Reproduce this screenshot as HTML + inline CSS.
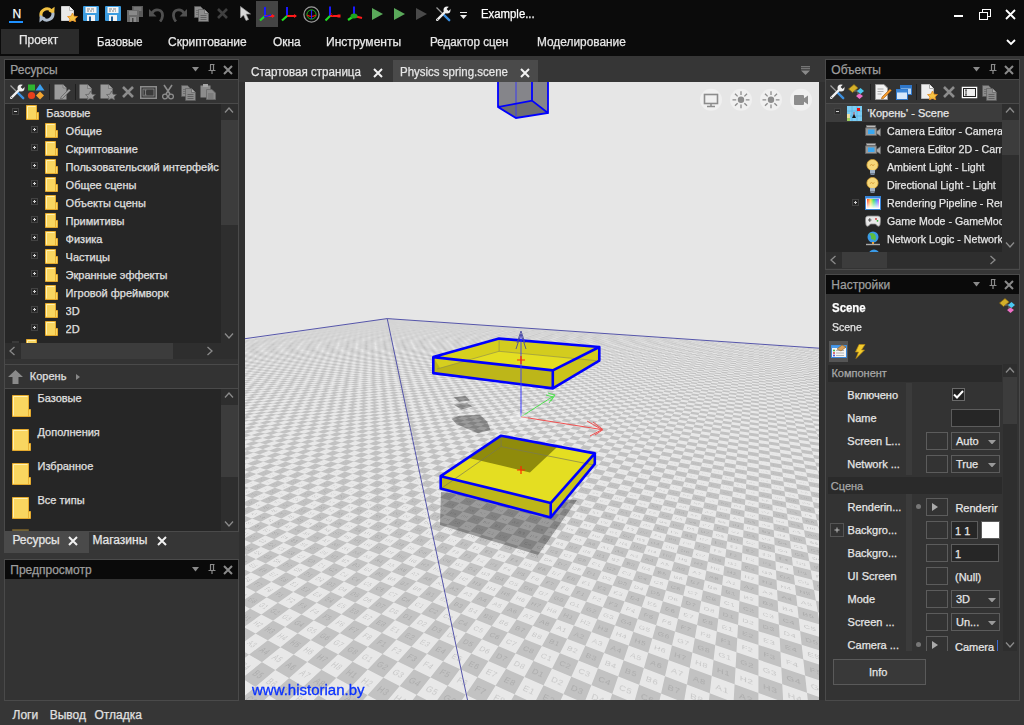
<!DOCTYPE html><html><head><meta charset="utf-8"><style>
*{margin:0;padding:0;box-sizing:border-box}
html,body{width:1024px;height:725px;overflow:hidden}
body{background:#363636;font-family:"Liberation Sans",sans-serif;font-size:12px;position:relative}
.a{position:absolute;display:block}
.t{position:absolute;white-space:nowrap;-webkit-text-stroke:0.25px currentColor}
</style></head><body>
<div class="a" style="left:0px;top:0px;width:1024px;height:56px;background:#0b0b0b;"></div>
<div class="a" style="left:1px;top:29px;width:78px;height:25px;background:#2b2b2b;"></div>
<div class="t" style="left:12.5px;top:6.64px;font-size:12px;line-height:14px;color:#ffffff;font-weight:normal;">N</div>
<div class="a" style="left:9px;top:21px;width:14px;height:1.5px;background:#1e90ff;"></div>
<div class="t" style="left:481.3px;top:7.34px;font-size:12px;line-height:14px;color:#ffffff;"><span style="display:inline-block;transform-origin:0 0;transform:scaleX(0.9470)">Example...</span></div>
<div class="t" style="left:18.75px;top:32.84px;font-size:12px;line-height:14px;color:#e8e8e8;"><span style="display:inline-block;transform-origin:0 0;transform:scaleX(0.9942)">Проект</span></div>
<div class="t" style="left:96.6px;top:35.34px;font-size:12px;line-height:14px;color:#e8e8e8;"><span style="display:inline-block;transform-origin:0 0;transform:scaleX(0.9451)">Базовые</span></div>
<div class="t" style="left:168.3px;top:35.34px;font-size:12px;line-height:14px;color:#e8e8e8;"><span style="display:inline-block;transform-origin:0 0;transform:scaleX(0.9994)">Скриптование</span></div>
<div class="t" style="left:273.3px;top:35.34px;font-size:12px;line-height:14px;color:#e8e8e8;"><span style="display:inline-block;transform-origin:0 0;transform:scaleX(0.9932)">Окна</span></div>
<div class="t" style="left:326.4px;top:35.34px;font-size:12px;line-height:14px;color:#e8e8e8;"><span style="display:inline-block;transform-origin:0 0;transform:scaleX(1.0050)">Инструменты</span></div>
<div class="t" style="left:429.5px;top:35.34px;font-size:12px;line-height:14px;color:#e8e8e8;"><span style="display:inline-block;transform-origin:0 0;transform:scaleX(0.9688)">Редактор сцен</span></div>
<div class="t" style="left:536.7px;top:35.34px;font-size:12px;line-height:14px;color:#e8e8e8;"><span style="display:inline-block;transform-origin:0 0;transform:scaleX(0.9889)">Моделирование</span></div>
<div class="a" style="left:4px;top:59px;width:235px;height:473px;background:#333;border:1px solid #4a4a4a;"></div>
<div class="a" style="left:5px;top:60px;width:233px;height:19px;background:#0a0a0a;"></div>
<div class="t" style="left:10.3px;top:62.84px;font-size:12px;line-height:14px;color:#9e9e9e;">Ресурсы</div>
<div class="a" style="left:5px;top:79px;width:233px;height:1px;background:#4a4a4a;"></div>
<div class="a" style="left:5px;top:103px;width:233px;height:1px;background:#4a4a4a;"></div>
<div class="a" style="left:5px;top:104px;width:216px;height:239px;background:#262626;"></div>
<div class="a" style="left:221px;top:104px;width:17px;height:239px;background:#2e2e2e;"></div>
<div class="a" style="left:221px;top:120px;width:17px;height:105px;background:#3c3c3c;"></div>
<div class="a" style="left:5px;top:343px;width:233px;height:16px;background:#2e2e2e;"></div>
<div class="a" style="left:21px;top:343px;width:152px;height:16px;background:#3c3c3c;"></div>
<div class="a" style="left:5px;top:364px;width:233px;height:1px;background:#4a4a4a;"></div>
<div class="t" style="left:29.8px;top:369.69px;font-size:11px;line-height:13px;color:#e0e0e0;">Корень</div>
<div class="a" style="left:5px;top:388px;width:233px;height:1px;background:#4a4a4a;"></div>
<div class="a" style="left:5px;top:389px;width:216px;height:142px;background:#262626;"></div>
<div class="a" style="left:221px;top:389px;width:17px;height:142px;background:#2e2e2e;"></div>
<div class="a" style="left:221px;top:405px;width:17px;height:72px;background:#3c3c3c;"></div>
<div class="t" style="left:46.3px;top:106.99px;font-size:11px;line-height:13px;color:#e0e0e0;width:174.70px;overflow:hidden;">Базовые</div>
<div class="t" style="left:65.6px;top:124.99px;font-size:11px;line-height:13px;color:#e0e0e0;width:155.40px;overflow:hidden;">Общие</div>
<div class="t" style="left:65.6px;top:142.99px;font-size:11px;line-height:13px;color:#e0e0e0;width:155.40px;overflow:hidden;">Скриптование</div>
<div class="t" style="left:65.6px;top:160.99px;font-size:11px;line-height:13px;color:#e0e0e0;width:155.40px;overflow:hidden;">Пользовательский интерфейс</div>
<div class="t" style="left:65.6px;top:178.99px;font-size:11px;line-height:13px;color:#e0e0e0;width:155.40px;overflow:hidden;">Общее сцены</div>
<div class="t" style="left:65.6px;top:196.99px;font-size:11px;line-height:13px;color:#e0e0e0;width:155.40px;overflow:hidden;">Объекты сцены</div>
<div class="t" style="left:65.6px;top:214.99px;font-size:11px;line-height:13px;color:#e0e0e0;width:155.40px;overflow:hidden;">Примитивы</div>
<div class="t" style="left:65.6px;top:232.99px;font-size:11px;line-height:13px;color:#e0e0e0;width:155.40px;overflow:hidden;">Физика</div>
<div class="t" style="left:65.6px;top:250.99px;font-size:11px;line-height:13px;color:#e0e0e0;width:155.40px;overflow:hidden;">Частицы</div>
<div class="t" style="left:65.6px;top:268.99px;font-size:11px;line-height:13px;color:#e0e0e0;width:155.40px;overflow:hidden;">Экранные эффекты</div>
<div class="t" style="left:65.6px;top:286.99px;font-size:11px;line-height:13px;color:#e0e0e0;width:155.40px;overflow:hidden;">Игровой фреймворк</div>
<div class="t" style="left:65.6px;top:304.99px;font-size:11px;line-height:13px;color:#e0e0e0;width:155.40px;overflow:hidden;">3D</div>
<div class="t" style="left:65.6px;top:322.99px;font-size:11px;line-height:13px;color:#e0e0e0;width:155.40px;overflow:hidden;">2D</div>
<div class="t" style="left:37.5px;top:392.19px;font-size:11px;line-height:13px;color:#e0e0e0;">Базовые</div>
<div class="t" style="left:37.5px;top:426.19px;font-size:11px;line-height:13px;color:#e0e0e0;">Дополнения</div>
<div class="t" style="left:37.5px;top:460.19px;font-size:11px;line-height:13px;color:#e0e0e0;">Избранное</div>
<div class="t" style="left:37.5px;top:494.19px;font-size:11px;line-height:13px;color:#e0e0e0;">Все типы</div>
<div class="a" style="left:4px;top:531px;width:85px;height:22px;background:#4a4a4a;"></div>
<div class="t" style="left:12.4px;top:532.54px;font-size:12px;line-height:14px;color:#e6e6e6;">Ресурсы</div>
<div class="t" style="left:92.4px;top:532.54px;font-size:12px;line-height:14px;color:#e6e6e6;">Магазины</div>
<div class="a" style="left:4px;top:559px;width:235px;height:142px;background:#333;border:1px solid #4a4a4a;"></div>
<div class="a" style="left:5px;top:560px;width:233px;height:19px;background:#0a0a0a;"></div>
<div class="t" style="left:10.3px;top:562.84px;font-size:12px;line-height:14px;color:#9e9e9e;">Предпросмотр</div>
<div class="t" style="left:12.5px;top:707.84px;font-size:12px;line-height:14px;color:#e0e0e0;">Логи</div>
<div class="t" style="left:49.7px;top:707.84px;font-size:12px;line-height:14px;color:#e0e0e0;">Вывод</div>
<div class="t" style="left:94.5px;top:707.84px;font-size:12px;line-height:14px;color:#e0e0e0;">Отладка</div>
<div class="a" style="left:239px;top:56px;width:587px;height:26px;background:#363636;"></div>
<div class="a" style="left:239px;top:82px;width:6px;height:618px;background:#303030;"></div>
<div class="a" style="left:819px;top:82px;width:6px;height:618px;background:#303030;"></div>
<div class="a" style="left:393px;top:60px;width:145px;height:22px;background:#4a4a4a;"></div>
<div class="t" style="left:251px;top:64.84px;font-size:12px;line-height:14px;color:#e6e6e6;"><span style="display:inline-block;transform-origin:0 0;transform:scaleX(0.9681)">Стартовая страница</span></div>
<div class="t" style="left:400px;top:64.84px;font-size:12px;line-height:14px;color:#e6e6e6;"><span style="display:inline-block;transform-origin:0 0;transform:scaleX(0.9581)">Physics spring.scene</span></div>
<div class="a" style="left:245px;top:82px;width:574px;height:618px;background:#e6e6e6;overflow:hidden">
<svg class="a" style="left:0;top:0" width="574" height="618" viewBox="245 82 574 618"><defs><filter id="ff" x="0" y="0" width="1" height="1" color-interpolation-filters="sRGB"><feComponentTransfer><feFuncR type="linear" slope="0.1529" intercept="0.7608"/><feFuncG type="linear" slope="0.1529" intercept="0.7608"/><feFuncB type="linear" slope="0.1529" intercept="0.7608"/></feComponentTransfer></filter></defs><g filter="url(#ff)" style="isolation:isolate"><path d="M387.20 318.60 L826.16 349.34 L2201.22 2137.45 L-213.59 409.97Z" fill="#fff"/><path d="M387.20 318.60 L388.40 318.68 L-212.78 410.55 L-213.59 409.97ZM390.60 318.84 L392.81 318.99 L-209.79 412.69 L-211.30 411.61ZM395.03 319.15 L397.26 319.30 L-206.71 414.89 L-208.26 413.78ZM399.51 319.46 L401.76 319.62 L-203.54 417.16 L-205.14 416.01ZM404.03 319.78 L406.31 319.94 L-200.28 419.49 L-201.92 418.31ZM408.61 320.10 L410.92 320.26 L-196.91 421.90 L-198.61 420.69ZM413.24 320.42 L415.57 320.59 L-193.44 424.38 L-195.19 423.13ZM417.92 320.75 L420.28 320.92 L-189.86 426.94 L-191.67 425.65ZM422.65 321.08 L425.04 321.25 L-186.17 429.58 L-188.03 428.25ZM427.44 321.42 L429.85 321.59 L-182.36 432.31 L-184.28 430.94ZM432.28 321.76 L434.72 321.93 L-178.42 435.13 L-180.40 433.71ZM437.18 322.10 L439.65 322.27 L-174.34 438.04 L-176.40 436.57ZM442.13 322.45 L444.63 322.62 L-170.13 441.06 L-172.25 439.54ZM447.14 322.80 L449.67 322.97 L-165.77 444.18 L-167.97 442.60ZM452.21 323.15 L454.77 323.33 L-161.26 447.40 L-163.53 445.78ZM457.34 323.51 L459.93 323.69 L-156.58 450.75 L-158.94 449.06ZM462.53 323.88 L465.15 324.06 L-151.73 454.22 L-154.18 452.47ZM467.79 324.24 L470.44 324.43 L-146.70 457.82 L-149.24 456.00ZM473.10 324.62 L475.78 324.80 L-141.48 461.55 L-144.12 459.67ZM478.48 324.99 L481.19 325.18 L-136.06 465.43 L-138.79 463.47ZM483.92 325.37 L486.67 325.57 L-130.42 469.47 L-133.26 467.43ZM489.43 325.76 L492.22 325.95 L-124.55 473.67 L-127.51 471.55ZM495.01 326.15 L497.83 326.35 L-118.44 478.04 L-121.52 475.83ZM500.66 326.55 L503.51 326.74 L-112.07 482.59 L-115.28 480.29ZM506.38 326.95 L509.26 327.15 L-105.42 487.35 L-108.78 484.95ZM512.17 327.35 L515.09 327.56 L-98.49 492.31 L-101.99 489.80ZM518.03 327.76 L520.98 327.97 L-91.24 497.49 L-94.90 494.87ZM523.96 328.18 L526.96 328.39 L-83.65 502.92 L-87.49 500.18ZM529.97 328.60 L533.01 328.81 L-75.71 508.60 L-79.73 505.73ZM536.06 329.02 L539.13 329.24 L-67.39 514.55 L-71.60 511.54ZM542.23 329.46 L545.34 329.67 L-58.65 520.80 L-63.08 517.64ZM548.47 329.89 L551.63 330.11 L-49.48 527.37 L-54.12 524.05ZM554.80 330.34 L558.00 330.56 L-39.82 534.28 L-44.71 530.78ZM561.21 330.79 L564.45 331.01 L-29.64 541.56 L-34.80 537.87ZM567.71 331.24 L570.99 331.47 L-18.91 549.23 L-24.35 545.34ZM574.29 331.70 L577.62 331.93 L-7.57 557.35 L-13.32 553.23ZM580.96 332.17 L584.33 332.40 L4.43 565.93 L-1.66 561.58ZM587.72 332.64 L591.14 332.88 L17.14 575.03 L10.69 570.41ZM594.58 333.12 L598.04 333.36 L30.64 584.68 L23.79 579.78ZM601.52 333.61 L605.03 333.85 L45.00 594.96 L37.71 589.74ZM608.57 334.10 L612.12 334.35 L60.31 605.91 L52.53 600.34ZM615.71 334.60 L619.31 334.85 L76.66 617.60 L68.35 611.66ZM622.95 335.11 L626.60 335.36 L94.16 630.12 L85.26 623.75ZM630.29 335.62 L634.00 335.88 L112.93 643.55 L103.37 636.71ZM637.73 336.14 L641.50 336.41 L133.13 658.00 L122.84 650.64ZM645.29 336.67 L649.10 336.94 L154.91 673.58 L143.81 665.64ZM652.95 337.21 L656.82 337.48 L178.49 690.45 L166.46 681.85ZM660.72 337.75 L664.65 338.03 L204.07 708.75 L191.01 699.41ZM668.60 338.31 L672.59 338.58 L231.95 728.69 L217.71 718.50ZM676.61 338.87 L680.65 339.15 L262.42 750.49 L246.84 739.34ZM684.72 339.43 L688.83 339.72 L295.88 774.43 L278.75 762.17ZM692.97 340.01 L697.13 340.30 L332.80 800.84 L313.88 787.30ZM701.33 340.60 L705.56 340.89 L373.72 830.11 L352.72 815.09ZM709.82 341.19 L714.12 341.49 L419.34 862.75 L395.89 845.97ZM718.44 341.80 L722.80 342.10 L470.53 899.37 L444.18 880.52ZM727.19 342.41 L731.62 342.72 L528.36 940.74 L498.54 919.40ZM736.08 343.03 L740.58 343.35 L594.23 987.86 L560.19 963.51ZM745.11 343.66 L749.68 343.98 L669.92 1042.00 L630.71 1013.96ZM754.28 344.31 L758.92 344.63 L757.81 1104.88 L712.16 1072.23ZM763.60 344.96 L768.31 345.29 L861.12 1178.79 L807.30 1140.28ZM773.06 345.62 L777.85 345.96 L984.29 1266.90 L919.88 1220.82ZM782.68 346.29 L787.54 346.63 L1133.66 1373.75 L1055.20 1317.63ZM792.45 346.98 L797.40 347.32 L1318.56 1506.02 L1220.92 1436.17ZM802.38 347.67 L807.41 348.03 L1553.41 1674.03 L1428.56 1584.71ZM812.48 348.38 L817.59 348.74 L1861.61 1894.50 L1696.35 1776.28ZM822.74 349.10 L826.16 349.34 L2201.22 2137.45 L2054.85 2032.74Z" fill="#000"/><path d="M387.20 318.60 L826.16 349.34 L826.65 349.97 L385.45 318.87ZM383.38 319.18 L827.23 350.73 L827.83 351.50 L381.29 319.50ZM379.17 319.82 L828.43 352.28 L829.04 353.08 L377.03 320.15ZM374.86 320.48 L829.67 353.89 L830.30 354.72 L372.67 320.81ZM370.45 321.15 L830.95 355.56 L831.61 356.42 L368.21 321.49ZM365.94 321.83 L832.28 357.29 L832.96 358.18 L363.65 322.18ZM361.33 322.53 L833.66 359.08 L834.37 360.00 L358.98 322.89ZM356.60 323.25 L835.09 360.94 L835.83 361.90 L354.20 323.62ZM351.76 323.99 L836.58 362.88 L837.34 363.88 L349.30 324.36ZM346.81 324.74 L838.13 364.89 L838.92 365.93 L344.28 325.13ZM341.73 325.52 L839.74 366.99 L840.57 368.07 L339.14 325.91ZM336.52 326.31 L841.42 369.17 L842.28 370.30 L333.87 326.71ZM331.19 327.12 L843.16 371.45 L844.07 372.62 L328.47 327.53ZM325.71 327.95 L844.99 373.82 L845.93 375.04 L322.92 328.38ZM320.10 328.81 L846.90 376.30 L847.88 377.58 L317.23 329.24ZM314.33 329.68 L848.89 378.89 L849.92 380.23 L311.40 330.13ZM308.42 330.58 L850.97 381.60 L852.05 383.00 L305.40 331.04ZM302.34 331.51 L853.16 384.44 L854.29 385.91 L299.24 331.98ZM296.10 332.45 L855.45 387.42 L856.64 388.96 L292.92 332.94ZM289.69 333.43 L857.85 390.55 L859.10 392.17 L286.41 333.93ZM283.09 334.43 L860.38 393.83 L861.70 395.54 L279.72 334.95ZM276.31 335.46 L863.04 397.29 L864.43 399.09 L272.84 335.99ZM269.33 336.53 L865.85 400.94 L867.31 402.84 L265.76 337.07ZM262.14 337.62 L868.81 404.79 L870.35 406.80 L258.47 338.18ZM254.75 338.74 L871.94 408.86 L873.57 410.98 L250.96 339.32ZM247.12 339.90 L875.25 413.16 L876.98 415.41 L243.23 340.50ZM239.27 341.10 L878.76 417.73 L880.60 420.12 L235.25 341.71ZM231.17 342.33 L882.49 422.58 L884.44 425.12 L227.02 342.96ZM222.81 343.60 L886.46 427.75 L888.54 430.46 L218.53 344.25ZM214.19 344.91 L890.70 433.25 L892.92 436.15 L209.77 345.58ZM205.28 346.27 L895.22 439.14 L897.60 442.24 L200.71 346.96ZM196.07 347.67 L900.07 445.44 L902.63 448.77 L191.36 348.38ZM186.56 349.11 L905.28 452.22 L908.03 455.79 L181.68 349.86ZM176.72 350.61 L910.88 459.50 L913.85 463.36 L171.67 351.38ZM166.53 352.16 L916.93 467.37 L920.15 471.55 L161.30 352.95ZM155.98 353.76 L923.49 475.90 L926.98 480.43 L150.56 354.59ZM145.05 355.43 L930.61 485.16 L934.41 490.10 L139.43 356.28ZM133.71 357.15 L938.38 495.26 L942.53 500.66 L127.89 358.04ZM121.95 358.94 L946.88 506.32 L951.45 512.25 L115.90 359.86ZM109.74 360.80 L956.23 518.48 L961.27 525.03 L103.46 361.75ZM97.05 362.73 L966.57 531.91 L972.15 539.17 L90.52 363.72ZM83.85 364.73 L978.04 546.83 L984.26 554.93 L77.06 365.77ZM70.12 366.82 L990.85 563.50 L997.84 572.59 L63.04 367.90ZM55.82 369.00 L1005.26 582.24 L1013.16 592.51 L48.44 370.12ZM40.91 371.26 L1021.58 603.46 L1030.58 615.16 L33.22 372.43ZM25.35 373.63 L1040.22 627.69 L1050.56 641.15 L17.32 374.85ZM9.11 376.10 L1061.70 655.63 L1073.72 671.26 L0.72 377.38ZM-7.87 378.68 L1086.74 688.19 L1100.88 706.57 L-16.65 380.02ZM-25.64 381.38 L1116.29 726.62 L1133.16 748.56 L-34.83 382.78ZM-44.25 384.21 L1151.70 772.67 L1172.18 799.30 L-53.88 385.68ZM-63.76 387.18 L1194.91 828.85 L1220.29 861.85 L-73.87 388.72ZM-84.24 390.30 L1248.80 898.93 L1281.07 940.89 L-94.87 391.91ZM-105.77 393.57 L1317.89 988.78 L1360.31 1043.93 L-116.96 395.27ZM-128.43 397.02 L1409.69 1108.15 L1467.90 1183.85 L-140.21 398.81ZM-152.31 400.65 L1537.56 1274.43 L1622.40 1384.75 L-164.74 402.54ZM-177.51 404.48 L1727.99 1522.06 L1863.00 1697.64 L-190.64 406.48ZM-204.14 408.53 L2041.74 1930.07 L2201.22 2137.45 L-213.59 409.97Z" fill="#fff" style="mix-blend-mode:difference"/></g></svg>
<div class="a" style="left:0;top:0;width:574px;height:618px;overflow:hidden;-webkit-mask-image:linear-gradient(to bottom, transparent 360px, #000 440px);mask-image:linear-gradient(to bottom, transparent 360px, #000 440px)"><div class="a" style="left:0;top:0;width:1894.0px;height:1586.2px;transform-origin:0 0;transform:matrix3d(0.11699661,-0.03165991,0,-0.0001758396,-0.18344925,-0.06425577,0,-0.0003568774,0,0,1,0,167.536036,297.705136,0,1.00000000)"><svg width="1894" height="1586"><defs><pattern id="lblA" patternUnits="userSpaceOnUse" x="70.00" y="190.23" width="256" height="256"><g font-family="Liberation Sans" font-size="13.5" text-anchor="middle" letter-spacing="1"><text x="16.0" y="20.9" fill="#c8c8c8">A1</text><text x="48.0" y="20.9" fill="#acacac">A2</text><text x="80.0" y="20.9" fill="#c8c8c8">A3</text><text x="112.0" y="20.9" fill="#acacac">A4</text><text x="144.0" y="20.9" fill="#c8c8c8">A5</text><text x="176.0" y="20.9" fill="#acacac">A6</text><text x="208.0" y="20.9" fill="#c8c8c8">A7</text><text x="240.0" y="20.9" fill="#acacac">A8</text><text x="16.0" y="52.9" fill="#acacac">B1</text><text x="48.0" y="52.9" fill="#c8c8c8">B2</text><text x="80.0" y="52.9" fill="#acacac">B3</text><text x="112.0" y="52.9" fill="#c8c8c8">B4</text><text x="144.0" y="52.9" fill="#acacac">B5</text><text x="176.0" y="52.9" fill="#c8c8c8">B6</text><text x="208.0" y="52.9" fill="#acacac">B7</text><text x="240.0" y="52.9" fill="#c8c8c8">B8</text><text x="16.0" y="84.9" fill="#c8c8c8">C1</text><text x="48.0" y="84.9" fill="#acacac">C2</text><text x="80.0" y="84.9" fill="#c8c8c8">C3</text><text x="112.0" y="84.9" fill="#acacac">C4</text><text x="144.0" y="84.9" fill="#c8c8c8">C5</text><text x="176.0" y="84.9" fill="#acacac">C6</text><text x="208.0" y="84.9" fill="#c8c8c8">C7</text><text x="240.0" y="84.9" fill="#acacac">C8</text><text x="16.0" y="116.9" fill="#acacac">D1</text><text x="48.0" y="116.9" fill="#c8c8c8">D2</text><text x="80.0" y="116.9" fill="#acacac">D3</text><text x="112.0" y="116.9" fill="#c8c8c8">D4</text><text x="144.0" y="116.9" fill="#acacac">D5</text><text x="176.0" y="116.9" fill="#c8c8c8">D6</text><text x="208.0" y="116.9" fill="#acacac">D7</text><text x="240.0" y="116.9" fill="#c8c8c8">D8</text><text x="16.0" y="148.9" fill="#c8c8c8">E1</text><text x="48.0" y="148.9" fill="#acacac">E2</text><text x="80.0" y="148.9" fill="#c8c8c8">E3</text><text x="112.0" y="148.9" fill="#acacac">E4</text><text x="144.0" y="148.9" fill="#c8c8c8">E5</text><text x="176.0" y="148.9" fill="#acacac">E6</text><text x="208.0" y="148.9" fill="#c8c8c8">E7</text><text x="240.0" y="148.9" fill="#acacac">E8</text><text x="16.0" y="180.9" fill="#acacac">F1</text><text x="48.0" y="180.9" fill="#c8c8c8">F2</text><text x="80.0" y="180.9" fill="#acacac">F3</text><text x="112.0" y="180.9" fill="#c8c8c8">F4</text><text x="144.0" y="180.9" fill="#acacac">F5</text><text x="176.0" y="180.9" fill="#c8c8c8">F6</text><text x="208.0" y="180.9" fill="#acacac">F7</text><text x="240.0" y="180.9" fill="#c8c8c8">F8</text><text x="16.0" y="212.9" fill="#c8c8c8">G1</text><text x="48.0" y="212.9" fill="#acacac">G2</text><text x="80.0" y="212.9" fill="#c8c8c8">G3</text><text x="112.0" y="212.9" fill="#acacac">G4</text><text x="144.0" y="212.9" fill="#c8c8c8">G5</text><text x="176.0" y="212.9" fill="#acacac">G6</text><text x="208.0" y="212.9" fill="#c8c8c8">G7</text><text x="240.0" y="212.9" fill="#acacac">G8</text><text x="16.0" y="244.9" fill="#acacac">H1</text><text x="48.0" y="244.9" fill="#c8c8c8">H2</text><text x="80.0" y="244.9" fill="#acacac">H3</text><text x="112.0" y="244.9" fill="#c8c8c8">H4</text><text x="144.0" y="244.9" fill="#acacac">H5</text><text x="176.0" y="244.9" fill="#c8c8c8">H6</text><text x="208.0" y="244.9" fill="#acacac">H7</text><text x="240.0" y="244.9" fill="#c8c8c8">H8</text></g></pattern></defs><rect width="1894" height="1586" fill="url(#lblA)"/></svg></div></div>
</div>
<svg class="a" style="left:245px;top:82px" width="574" height="618" viewBox="245 82 574 618"><path d="M245 338.7 L387.2 318.6 L819 348.2" stroke="#5555aa" stroke-width="1" fill="none"/><path d="M387.2 318.6 L467.5 700" stroke="#5555aa" stroke-width="1" fill="none"/><path d="M453.9 397.2 L465.2 395.7 L470 400.6 L459.3 402.1Z" fill="#000" fill-opacity="0.33"/><path d="M453.4 404.5 L467.1 403.1 L472.5 406.5 L461.3 409.4Z" fill="#000" fill-opacity="0.33"/><path d="M451.5 418.7 L459.3 415.8 L479.8 414.8 L487.1 421.6 L490.5 429.9 L477.9 433.3 L456.4 424Z" fill="#000" fill-opacity="0.33"/><path d="M441 492 L577 500 L538 555 L440 525Z" fill="#000" fill-opacity="0.33"/><path d="M521 388 V416.8" stroke="#3a3aff" stroke-width="1"/><path d="M521 416.8 L554.4 395.5" stroke="#50e050" stroke-width="1"/><path d="M548 393 L555 395 L551 401 M546 395 L553 397 L549 403" stroke="#50e050" stroke-width="1" fill="none"/><path d="M521 416.8 L602 429.6" stroke="#f05050" stroke-width="1"/><path d="M587 421 L602 429.6 L590 436 M593 422 L603 429.6 L595 435" stroke="#f05050" stroke-width="1" fill="none"/><ellipse cx="519" cy="418" rx="9" ry="5" fill="#fff" fill-opacity="0.35"/><path d="M433.3 357.1 L552.8 370.4 L552.8 388.4 L433.3 373.1Z" fill="#bdb619"/><path d="M552.8 370.4 L599.3 347 L599.3 360.6 L552.8 388.4Z" fill="#cac31c"/><path d="M433.3 357.1 L499.1 338.6 L599.3 347 L552.8 370.4Z" fill="#e4de22"/><path d="M433.3 357.1 L499.1 338.6 L499.1 351.3 L440 368Z" fill="#d6cf1e"/><path d="M499.1 338.6 L599.3 347 L596 360.6 L499.1 351.3Z" fill="#d3cc1e"/><path d="M499.1 339 V351.3 L596 360.6 M499.1 351.3 L437 369" stroke="#8a8a50" stroke-width="0.9" fill="none" stroke-opacity="0.7"/><path d="M433.3 357.1 L499.1 338.6 L599.3 347 L552.8 370.4Z M433.3 357.1 V373.1 L552.8 388.4 L599.3 360.6 V347 M552.8 370.4 V388.4" stroke="#0000ff" stroke-width="2.6" fill="none" stroke-linejoin="round"/><path d="M521 334 V388" stroke="#3a3aff" stroke-width="1" stroke-opacity="0.9"/><path d="M516 349 L521 334 L526 349 M517 343 L521 331 L525 343" stroke="#4a4aa0" stroke-width="0.9" fill="none"/><path d="M517 360 H525 M521 356 V364" stroke="#ff2a00" stroke-width="1.2"/><path d="M440.7 476.2 L550.7 503.1 L550.7 517.5 L440.7 488.6Z" fill="#bdb619"/><path d="M550.7 503.1 L594.8 453.4 L594.8 463.8 L550.7 517.5Z" fill="#cac31c"/><path d="M440.7 476.2 L501.1 435.7 L594.8 453.4 L550.7 503.1Z" fill="#e4de22"/><path d="M469 458 L501.1 435.7 L557.6 446.5 L529.9 472.4Z" fill="#8f8b0c"/><path d="M501.1 436 V446.6 L593.1 464.9 M501.1 446.6 L441.8 488" stroke="#77775a" stroke-width="0.9" fill="none" stroke-opacity="0.75"/><path d="M440.7 476.2 L501.1 435.7 L594.8 453.4 L550.7 503.1Z M440.7 476.2 V488.6 L550.7 517.5 L594.8 463.8 V453.4 M550.7 503.1 V517.5" stroke="#0000ff" stroke-width="2.6" fill="none" stroke-linejoin="round"/><path d="M517 470 H525 M521 466 V474" stroke="#ff2a00" stroke-width="1.2"/><path d="M498 82 H548 V113 L516 118 L498 107Z" fill="#85858a"/><path d="M498 107 L532 100.6 L548 113 L516 118Z" fill="#6e6e72"/><path d="M532 82 V100.6 L548 113" fill="none" stroke="#9a9aa0" stroke-width="0.8"/><path d="M516 82 V118" stroke="#3a3aee" stroke-width="1"/><path d="M498 82 V107 L516 118 L548 113 V82 M498 107 L532 100.6 L548 113 M532 82 V100.6" stroke="#0000ff" stroke-width="1.8" fill="none"/><circle cx="711" cy="99.8" r="11" fill="#f0f0f0"/><circle cx="741" cy="99.8" r="11" fill="#f0f0f0"/><circle cx="771" cy="99.8" r="11" fill="#f0f0f0"/><circle cx="801" cy="99.8" r="11" fill="#f0f0f0"/><rect x="704.5" y="94.5" width="13" height="9" fill="none" stroke="#8c8c8c" stroke-width="1.6"/><path d="M711 104 V106 M707 106.5 H715" stroke="#8c8c8c" stroke-width="1.5"/><circle cx="741" cy="99.8" r="3.2" fill="#8c8c8c"/><path d="M745.80 99.80 L749.50 99.80 M744.39 103.19 L747.01 105.81 M741.00 104.60 L741.00 108.30 M737.61 103.19 L734.99 105.81 M736.20 99.80 L732.50 99.80 M737.61 96.41 L734.99 93.79 M741.00 95.00 L741.00 91.30 M744.39 96.41 L747.01 93.79 " stroke="#8c8c8c" stroke-width="1.3"/><circle cx="771" cy="99.8" r="3.2" fill="#8c8c8c"/><path d="M775.80 99.80 L779.50 99.80 M774.39 103.19 L777.01 105.81 M771.00 104.60 L771.00 108.30 M767.61 103.19 L764.99 105.81 M766.20 99.80 L762.50 99.80 M767.61 96.41 L764.99 93.79 M771.00 95.00 L771.00 91.30 M774.39 96.41 L777.01 93.79 " stroke="#8c8c8c" stroke-width="1.3"/><rect x="794" y="95" width="10" height="10" rx="1" fill="#8c8c8c"/><path d="M803 99 L808 95.5 V104.5 L803 101Z" fill="#8c8c8c"/></svg>
<div class="t" style="left:252px;top:681.30px;font-size:15px;line-height:17px;color:#0a32ff;-webkit-text-stroke:0.3px #0a32ff;">www.historian.by</div>
<div class="a" style="left:825px;top:59px;width:195px;height:211px;background:#333;border:1px solid #4a4a4a;"></div>
<div class="a" style="left:826px;top:60px;width:193px;height:19px;background:#0a0a0a;"></div>
<div class="t" style="left:831.3px;top:62.84px;font-size:12px;line-height:14px;color:#9e9e9e;">Объекты</div>
<div class="a" style="left:826px;top:79px;width:193px;height:1px;background:#4a4a4a;"></div>
<div class="a" style="left:826px;top:103px;width:193px;height:1px;background:#4a4a4a;"></div>
<div class="a" style="left:826px;top:104px;width:176px;height:148px;background:#262626;"></div>
<div class="a" style="left:1002px;top:104px;width:17px;height:148px;background:#2e2e2e;"></div>
<div class="a" style="left:1002px;top:120px;width:17px;height:35px;background:#3c3c3c;"></div>
<div class="a" style="left:826px;top:104px;width:176px;height:18px;background:#3c3c3c;"></div>
<div class="a" style="left:826px;top:252px;width:193px;height:16px;background:#2e2e2e;"></div>
<div class="a" style="left:842px;top:252px;width:45px;height:16px;background:#3c3c3c;"></div>
<div class="t" style="left:867.4px;top:106.99px;font-size:11px;line-height:13px;color:#e6e6e6;width:134.60px;overflow:hidden;">'Корень' - Scene</div>
<div class="t" style="left:886.7px;top:125.19px;font-size:11px;line-height:13px;color:#e6e6e6;width:115.30px;overflow:hidden;"><span style="display:inline-block;transform-origin:0 0;transform:scaleX(0.9670)">Camera Editor - Camera</span></div>
<div class="t" style="left:886.7px;top:143.19px;font-size:11px;line-height:13px;color:#e6e6e6;width:115.30px;overflow:hidden;"><span style="display:inline-block;transform-origin:0 0;transform:scaleX(0.9670)">Camera Editor 2D - Camera</span></div>
<div class="t" style="left:886.7px;top:161.19px;font-size:11px;line-height:13px;color:#e6e6e6;width:115.30px;overflow:hidden;"><span style="display:inline-block;transform-origin:0 0;transform:scaleX(0.9670)">Ambient Light - Light</span></div>
<div class="t" style="left:886.7px;top:179.19px;font-size:11px;line-height:13px;color:#e6e6e6;width:115.30px;overflow:hidden;"><span style="display:inline-block;transform-origin:0 0;transform:scaleX(0.9670)">Directional Light - Light</span></div>
<div class="t" style="left:886.7px;top:197.19px;font-size:11px;line-height:13px;color:#e6e6e6;width:115.30px;overflow:hidden;"><span style="display:inline-block;transform-origin:0 0;transform:scaleX(0.9670)">Rendering Pipeline - RenderingPipeline</span></div>
<div class="t" style="left:886.7px;top:215.19px;font-size:11px;line-height:13px;color:#e6e6e6;width:115.30px;overflow:hidden;"><span style="display:inline-block;transform-origin:0 0;transform:scaleX(0.9670)">Game Mode - GameMode</span></div>
<div class="t" style="left:886.7px;top:233.19px;font-size:11px;line-height:13px;color:#e6e6e6;width:115.30px;overflow:hidden;"><span style="display:inline-block;transform-origin:0 0;transform:scaleX(0.9670)">Network Logic - NetworkLogic</span></div>
<div class="a" style="left:825px;top:274px;width:195px;height:427px;background:#333;border:1px solid #4a4a4a;"></div>
<div class="a" style="left:826px;top:275px;width:193px;height:19px;background:#0a0a0a;"></div>
<div class="t" style="left:831.3px;top:277.84px;font-size:12px;line-height:14px;color:#9e9e9e;">Настройки</div>
<div class="t" style="left:832px;top:300.54px;font-size:12px;line-height:14px;color:#ffffff;font-weight:bold;"><span style="display:inline-block;transform-origin:0 0;transform:scaleX(0.9531)">Scene</span></div>
<div class="t" style="left:832.4px;top:321.39px;font-size:11px;line-height:13px;color:#e6e6e6;"><span style="display:inline-block;transform-origin:0 0;transform:scaleX(0.9550)">Scene</span></div>
<div class="a" style="left:829px;top:341px;width:19px;height:21px;background:#555;"></div>
<div class="a" style="left:828px;top:365px;width:174px;height:17px;background:#2a2a2a;"></div>
<div class="t" style="left:831.4px;top:367.29px;font-size:11px;line-height:13px;color:#a8a8a8;">Компонент</div>
<div class="t" style="left:847.3px;top:388.69px;font-size:11px;line-height:13px;color:#e6e6e6;">Включено</div>
<div class="t" style="left:847.3px;top:411.69px;font-size:11px;line-height:13px;color:#e6e6e6;">Name</div>
<div class="t" style="left:847.3px;top:434.69px;font-size:11px;line-height:13px;color:#e6e6e6;">Screen L...</div>
<div class="t" style="left:847.3px;top:457.69px;font-size:11px;line-height:13px;color:#e6e6e6;">Network ...</div>
<div class="a" style="left:828px;top:477px;width:174px;height:17px;background:#2a2a2a;"></div>
<div class="t" style="left:830.8px;top:479.69px;font-size:11px;line-height:13px;color:#a8a8a8;">Сцена</div>
<div class="t" style="left:847.6px;top:500.69px;font-size:11px;line-height:13px;color:#e6e6e6;">Renderin...</div>
<div class="t" style="left:847.6px;top:523.69px;font-size:11px;line-height:13px;color:#e6e6e6;">Backgro...</div>
<div class="t" style="left:847.6px;top:546.69px;font-size:11px;line-height:13px;color:#e6e6e6;">Backgro...</div>
<div class="t" style="left:847.6px;top:569.69px;font-size:11px;line-height:13px;color:#e6e6e6;">UI Screen</div>
<div class="t" style="left:847.6px;top:592.69px;font-size:11px;line-height:13px;color:#e6e6e6;">Mode</div>
<div class="t" style="left:847.6px;top:615.69px;font-size:11px;line-height:13px;color:#e6e6e6;">Screen ...</div>
<div class="t" style="left:847.6px;top:638.69px;font-size:11px;line-height:13px;color:#e6e6e6;">Camera ...</div>
<div class="a" style="left:833px;top:659px;width:93px;height:26px;background:#393939;border:1px solid #5a5a5a;"></div>
<div class="t" style="left:869px;top:665.69px;font-size:11px;line-height:13px;color:#e6e6e6;">Info</div>
<svg class="a" style="left:39px;top:5.5px;" width="16" height="17" viewBox="0 0 16 17">
<path d="M2.2 10.5 A6 6 0 0 1 12.2 4.6" stroke="#f0c040" stroke-width="3" fill="none"/>
<path d="M9.6 5.2 L15.6 0.8 L15.2 8.4 Z" fill="#f0c040"/>
<path d="M13.8 6.8 A6 6 0 0 1 3.8 12.4" stroke="#aebccc" stroke-width="3" fill="none"/>
<path d="M6.4 11.8 L0.4 16.4 L0.8 8.8 Z" fill="#aebccc"/></svg>
<svg class="a" style="left:61px;top:5.5px;" width="17" height="16" viewBox="0 0 17 16">
<path d="M0.5 0.5 H8.5 L12.5 4.5 V14.5 H0.5 Z" fill="#e9e9e9" stroke="#cfcfcf"/>
<path d="M8.5 0.5 V4.5 H12.5" fill="#fff" stroke="#bbb"/>
<path d="M11.5 7 L13 10.2 L16.5 10.6 L14 13 L14.7 16 L11.5 14.3 L8.3 16 L9 13 L6.5 10.6 L10 10.2 Z" fill="#f6c443" stroke="#e58a1e" stroke-width="0.8"/></svg>
<svg class="a" style="left:83px;top:6px;" width="16" height="15" viewBox="0 0 16 15">
<rect x="0" y="0" width="16" height="15" rx="1" fill="#3d9de0"/>
<rect x="2.5" y="1" width="11" height="6" fill="#f4f4f4"/>
<path d="M4 3h3M8 3h3M4 5h2M7 5h2M10 5h1" stroke="#666" stroke-width="0.8"/>
<rect x="4" y="9" width="8" height="6" fill="#f4f4f4"/>
<rect x="6" y="10.5" width="2" height="4.5" fill="#1b5f9a"/></svg>
<svg class="a" style="left:105px;top:6px;" width="16" height="15" viewBox="0 0 16 15">
<rect x="0" y="0" width="16" height="15" rx="1" fill="#3d9de0"/>
<rect x="2.5" y="1" width="11" height="6" fill="#f4f4f4"/>
<path d="M4 3h3M8 3h3M4 5h2M7 5h2M10 5h1" stroke="#666" stroke-width="0.8"/>
<rect x="4" y="9" width="8" height="6" fill="#f4f4f4"/>
<rect x="6" y="10.5" width="2" height="4.5" fill="#1b5f9a"/></svg>
<svg class="a" style="left:127px;top:5.5px;" width="16" height="16" viewBox="0 0 16 16">
<rect x="5" y="0" width="11" height="11" fill="#5a5a5a"/>
<rect x="6.5" y="1" width="8" height="4" fill="#777"/>
<rect x="0" y="4" width="12" height="12" fill="#6a6a6a"/>
<rect x="2" y="5" width="8" height="4" fill="#8a8a8a"/>
<rect x="3" y="11" width="6" height="5" fill="#8a8a8a"/>
<rect x="5" y="12" width="1.5" height="4" fill="#444"/></svg>
<svg class="a" style="left:149px;top:5.5px;" width="16" height="16" viewBox="0 0 16 16"><g >
<path d="M3 7 C6 2 14 3 13.5 10 C13.3 12.5 12 14.5 11 15.5" stroke="#505050" stroke-width="2.8" fill="none"/>
<path d="M0 3 L0 10.5 L7.5 10.5 Z" fill="#505050"/></g></svg>
<svg class="a" style="left:171px;top:5.5px;" width="16" height="16" viewBox="0 0 16 16"><g transform="translate(16,0) scale(-1,1)">
<path d="M3 7 C6 2 14 3 13.5 10 C13.3 12.5 12 14.5 11 15.5" stroke="#505050" stroke-width="2.8" fill="none"/>
<path d="M0 3 L0 10.5 L7.5 10.5 Z" fill="#505050"/></g></svg>
<svg class="a" style="left:194px;top:6px;" width="15" height="16" viewBox="0 0 15 16">
<path d="M0.5 0.5 H6.5 L9 3 V11.5 H0.5 Z" fill="#8e8e8e" stroke="#5a5a5a" stroke-width="0.6"/>
<path d="M2 4.5h5M2 6.5h5M2 8.5h5" stroke="#6a6a6a" stroke-width="0.8"/>
<path d="M4.5 3.5 H10.5 L14.5 7.5 V15.5 H4.5 Z" fill="#8e8e8e" stroke="#5a5a5a" stroke-width="0.6"/>
<path d="M10.5 3.5 V7.5 H14.5" fill="#a8a8a8" stroke="#5a5a5a" stroke-width="0.6"/>
<path d="M6.5 9.5h6M6.5 11.5h6M6.5 13.5h6" stroke="#5e5e5e" stroke-width="0.9"/></svg>
<svg class="a" style="left:217px;top:8px;" width="11" height="11" viewBox="0 0 11 11"><path d="M1 1 L10 10 M10 1 L1 10" stroke="#404040" stroke-width="2.6"/></svg>
<svg class="a" style="left:240px;top:5.5px;" width="11" height="15" viewBox="0 0 11 15"><path d="M0.5 0.5 L0.5 12 L3.5 9 L6 14.5 L8.5 13.5 L6 8 L10.5 8 Z" fill="#d8d8d8" stroke="#9a9a9a" stroke-width="0.7"/></svg>
<div class="a" style="left:256px;top:1px;width:22px;height:26px;background:#444;"></div>
<svg class="a" style="left:259px;top:6px;" width="16" height="16" viewBox="0 0 16 16"><path d="M6 1 V10" stroke="#1a1aff" stroke-width="2"/>
<path d="M6 10 H15" stroke="#ff1a1a" stroke-width="2"/><path d="M13 8 L16 10 L13 12Z" fill="#ff1a1a"/>
<path d="M6 10 L1 14.5" stroke="#22dd22" stroke-width="2.2"/><path d="M5 11 L12 9" stroke="#1a1aff" stroke-width="1.4"/></svg>
<svg class="a" style="left:281px;top:6px;" width="16" height="16" viewBox="0 0 16 16"><path d="M6 1 V10" stroke="#1a1aff" stroke-width="2"/>
<path d="M6 10 H15" stroke="#ff1a1a" stroke-width="2"/><path d="M13 8 L16 10 L13 12Z" fill="#ff1a1a"/>
<path d="M6 10 L1 14.5" stroke="#22dd22" stroke-width="2.2"/></svg>
<svg class="a" style="left:302.5px;top:5.5px;" width="17" height="17" viewBox="0 0 17 17"><circle cx="8.5" cy="8.5" r="7.6" stroke="#9a9a9a" stroke-width="1.3" fill="none"/>
<circle cx="8.5" cy="8.5" r="4.6" stroke="#1fbf1f" stroke-width="1" fill="none"/>
<path d="M4 9 Q8.5 12 13 9" stroke="#e11" stroke-width="1.1" fill="none"/>
<path d="M8.5 4 V13" stroke="#22e" stroke-width="1.1"/></svg>
<svg class="a" style="left:325px;top:6px;" width="16" height="16" viewBox="0 0 16 16"><path d="M5 0.5 V10" stroke="#1a1aff" stroke-width="2"/>
<path d="M5 10 H15" stroke="#ff1a1a" stroke-width="2"/><rect x="12.5" y="8.5" width="3" height="3" fill="#ff1a1a"/>
<path d="M5 10 L0.5 14.5" stroke="#22dd22" stroke-width="2.2"/><path d="M6 7 L8 10" stroke="#a00" stroke-width="1"/></svg>
<svg class="a" style="left:347px;top:6px;" width="16" height="16" viewBox="0 0 16 16"><path d="M7 0.5 V9" stroke="#1a1aff" stroke-width="2"/>
<path d="M7 10 L15 12" stroke="#ff1a1a" stroke-width="2"/>
<path d="M7 10 L1 14" stroke="#22dd22" stroke-width="2.2"/><ellipse cx="7" cy="10" rx="3.5" ry="2.5" fill="#1fa51f"/></svg>
<svg class="a" style="left:372px;top:8px;" width="11" height="12" viewBox="0 0 11 12"><path d="M0 0 L11 6 L0 12 Z" fill="#5aa95a"/></svg>
<svg class="a" style="left:394px;top:8px;" width="11" height="12" viewBox="0 0 11 12"><path d="M0 0 L11 6 L0 12 Z" fill="#5aa95a"/></svg>
<svg class="a" style="left:416px;top:8px;" width="11" height="12" viewBox="0 0 11 12"><path d="M0 0 L11 6 L0 12 Z" fill="#4a4a4a"/></svg>
<svg class="a" style="left:435px;top:6px;" width="16" height="16" viewBox="0 0 16 16">
<path d="M1.5 1.5 L8 8" stroke="#9a9a9a" stroke-width="1.2"/>
<path d="M8.5 8.5 L14.2 14.2" stroke="#3b8fe0" stroke-width="2.4" stroke-linecap="round"/>
<path d="M11.5 4.5 L2.2 13.8" stroke="#f0f0f0" stroke-width="2.4" stroke-linecap="round"/>
<circle cx="12" cy="4" r="3.5" fill="#f0f0f0"/><path d="M11.6 2.9 L14.6 -0.1 L16.6 1.9 L13.6 4.9 Z" fill="#0b0b0b"/>
<circle cx="2.6" cy="13.4" r="0.7" fill="#777"/></svg>
<svg class="a" style="left:460px;top:12px;" width="7" height="8" viewBox="0 0 7 8"><path d="M0 0.5 H7" stroke="#eee" stroke-width="1"/><path d="M0 3 H7 L3.5 7 Z" fill="#eee"/></svg>
<div class="a" style="left:954px;top:15px;width:9px;height:2px;background:#fff;"></div>
<svg class="a" style="left:979px;top:9px;" width="12" height="11" viewBox="0 0 12 11"><rect x="3.5" y="0.5" width="8" height="7" fill="none" stroke="#fff"/><rect x="0.5" y="3.5" width="8" height="7" fill="#0b0b0b" stroke="#fff"/></svg>
<svg class="a" style="left:1005px;top:9px;" width="11" height="11" viewBox="0 0 11 11"><path d="M1 1 L10 10 M10 1 L1 10" stroke="#fff" stroke-width="1.8"/></svg>
<svg class="a" style="left:1006px;top:39px;" width="10" height="7" viewBox="0 0 10 7"><path d="M1 1 L5 5 L9 1" stroke="#fff" stroke-width="1.8" fill="none"/></svg>
<svg class="a" style="left:192px;top:67px;" width="7" height="4.5" viewBox="0 0 7 4.5"><path d="M0 0 H7 L3.5 4.5 Z" fill="#8a8a8a"/></svg>
<svg class="a" style="left:208px;top:64px;" width="8" height="10" viewBox="0 0 8 10"><path d="M2 0.5 H6.5 M2.5 0.5 V6 M5.5 0.5 V6 M0.5 6.5 H7.5 M4 6.5 V10" stroke="#8a8a8a" stroke-width="1.2" fill="none"/></svg>
<svg class="a" style="left:223px;top:65px;" width="10" height="10" viewBox="0 0 10 10"><path d="M1 1 L9 9 M9 1 L1 9" stroke="#8a8a8a" stroke-width="2"/></svg>
<svg class="a" style="left:192px;top:567px;" width="7" height="4.5" viewBox="0 0 7 4.5"><path d="M0 0 H7 L3.5 4.5 Z" fill="#8a8a8a"/></svg>
<svg class="a" style="left:208px;top:564px;" width="8" height="10" viewBox="0 0 8 10"><path d="M2 0.5 H6.5 M2.5 0.5 V6 M5.5 0.5 V6 M0.5 6.5 H7.5 M4 6.5 V10" stroke="#8a8a8a" stroke-width="1.2" fill="none"/></svg>
<svg class="a" style="left:223px;top:565px;" width="10" height="10" viewBox="0 0 10 10"><path d="M1 1 L9 9 M9 1 L1 9" stroke="#8a8a8a" stroke-width="2"/></svg>
<svg class="a" style="left:9px;top:84px;" width="16" height="16" viewBox="0 0 16 16">
<path d="M1.5 1.5 L8 8" stroke="#9a9a9a" stroke-width="1.2"/>
<path d="M8.5 8.5 L14.2 14.2" stroke="#3b8fe0" stroke-width="2.4" stroke-linecap="round"/>
<path d="M11.5 4.5 L2.2 13.8" stroke="#f0f0f0" stroke-width="2.4" stroke-linecap="round"/>
<circle cx="12" cy="4" r="3.5" fill="#f0f0f0"/><path d="M11.6 2.9 L14.6 -0.1 L16.6 1.9 L13.6 4.9 Z" fill="#333"/>
<circle cx="2.6" cy="13.4" r="0.7" fill="#777"/></svg>
<svg class="a" style="left:27px;top:84px;" width="18" height="16" viewBox="0 0 18 16"><rect x="1" y="0.5" width="7" height="6" fill="#2fb52f"/><path d="M13 0 L17.5 6.5 H8.5Z" fill="#3aa0f0"/><circle cx="4.5" cy="11.5" r="3.6" fill="#e8401c"/><path d="M13 7.5 L17 11.5 L13 15.5 L9 11.5Z" fill="#f3a530"/></svg>
<div class="a" style="left:49px;top:84px;width:1px;height:16px;background:#1e1e1e;"></div>
<svg class="a" style="left:54px;top:84px;" width="17" height="16" viewBox="0 0 17 16"><path d="M0.5 0.5 H9 L12.5 4 V15.5 H0.5Z" fill="#9c9c9c"/>
<path d="M9 0.5 V4 H12.5" fill="#aaa" stroke="#6a6a6a" stroke-width="0.6"/>
<path d="M7 13 L15 5 L16.5 6.5 L8.5 14.5 L6.5 15Z" fill="#9c9c9c" stroke="#5e5e5e" stroke-width="0.7"/></svg>
<div class="a" style="left:75px;top:84px;width:1px;height:16px;background:#1e1e1e;"></div>
<svg class="a" style="left:79px;top:84px;" width="17" height="16" viewBox="0 0 17 16"><path d="M0.5 0.5 H8.5 L12.5 4.5 V14.5 H0.5 Z" fill="#9c9c9c"/>
<path d="M8.5 0.5 V4.5 H12.5" fill="#a5a5a5" stroke="#6a6a6a" stroke-width="0.6"/>
<path d="M11.5 7 L13 10.2 L16.5 10.6 L14 13 L14.7 16 L11.5 14.3 L8.3 16 L9 13 L6.5 10.6 L10 10.2 Z" fill="#9c9c9c" stroke="#5e5e5e" stroke-width="0.7"/></svg>
<svg class="a" style="left:99.5px;top:84px;" width="17" height="16" viewBox="0 0 17 16"><path d="M0.5 0.5 H8.5 L12.5 4.5 V14.5 H0.5 Z" fill="#9c9c9c"/>
<path d="M8.5 0.5 V4.5 H12.5" fill="#a5a5a5" stroke="#6a6a6a" stroke-width="0.6"/>
<path d="M11.5 7 L13 10.2 L16.5 10.6 L14 13 L14.7 16 L11.5 14.3 L8.3 16 L9 13 L6.5 10.6 L10 10.2 Z" fill="#9c9c9c" stroke="#5e5e5e" stroke-width="0.7"/></svg>
<svg class="a" style="left:122px;top:86px;" width="12" height="12" viewBox="0 0 12 12"><path d="M1 1 L11 11 M11 1 L1 11" stroke="#8c8c8c" stroke-width="2.6"/></svg>
<svg class="a" style="left:139.5px;top:86px;" width="17" height="13" viewBox="0 0 17 13"><rect x="0.75" y="0.75" width="15.5" height="11.5" fill="none" stroke="#8c8c8c" stroke-width="1.5"/><rect x="3" y="3" width="11" height="7" fill="#3a3a3a" stroke="#8c8c8c" stroke-width="0.8"/><path d="M4.5 4 h2 M5.5 4 V9 M4.5 9 h2" stroke="#8c8c8c" stroke-width="0.8"/></svg>
<svg class="a" style="left:161px;top:84px;" width="14" height="16" viewBox="0 0 14 16"><path d="M3 1 L9 10 M11 1 L5 10" stroke="#8c8c8c" stroke-width="1.6"/><circle cx="4" cy="12.5" r="2.4" fill="none" stroke="#8c8c8c" stroke-width="1.3"/><circle cx="10" cy="12.5" r="2.4" fill="none" stroke="#8c8c8c" stroke-width="1.3"/></svg>
<svg class="a" style="left:181px;top:85px;" width="15" height="16" viewBox="0 0 15 16">
<path d="M0.5 0.5 H6.5 L9 3 V11.5 H0.5 Z" fill="#8c8c8c" stroke="#5a5a5a" stroke-width="0.6"/>
<path d="M2 4.5h5M2 6.5h5M2 8.5h5" stroke="#6a6a6a" stroke-width="0.8"/>
<path d="M4.5 3.5 H10.5 L14.5 7.5 V15.5 H4.5 Z" fill="#8c8c8c" stroke="#5a5a5a" stroke-width="0.6"/>
<path d="M10.5 3.5 V7.5 H14.5" fill="#a8a8a8" stroke="#5a5a5a" stroke-width="0.6"/>
<path d="M6.5 9.5h6M6.5 11.5h6M6.5 13.5h6" stroke="#5e5e5e" stroke-width="0.9"/></svg>
<svg class="a" style="left:200px;top:84px;" width="16" height="16" viewBox="0 0 16 16"><rect x="0.5" y="1.5" width="10" height="12" fill="#8c8c8c"/><rect x="3" y="0" width="5" height="3" fill="#a5a5a5"/>
<path d="M6.5 5.5 H12 L15.5 9 V15.5 H6.5Z" fill="#8c8c8c" stroke="#6a6a6a" stroke-width="0.8"/>
<path d="M8 10h5.5M8 12h5.5M8 14h5.5" stroke="#6a6a6a" stroke-width="0.9"/></svg>
<div class="a" style="left:12px;top:108px;width:7px;height:7px;background:#262626;border:1px solid #424242"></div>
<svg class="a" style="left:12px;top:108px;" width="7" height="7" viewBox="0 0 7 7"><path d="M2 3.5 H5" stroke="#d0d0d0" stroke-width="1"/></svg>
<svg class="a" style="left:26px;top:105px;" width="13" height="15" viewBox="0 0 13 15">
<path d="M0.5 0.5 H10.5 V7.5 H12.5 V14.5 H0.5 Z" fill="#f9d660" stroke="#e4a92c"/>
<path d="M1.5 13.5 V1.5 H9.5" stroke="#fff1b0" stroke-width="1" fill="none"/>
<path d="M10.5 8 V14" stroke="#e4a92c" stroke-width="0.8"/></svg>
<div class="a" style="left:31px;top:126px;width:7px;height:7px;background:#262626;border:1px solid #424242"></div>
<svg class="a" style="left:31px;top:126px;" width="7" height="7" viewBox="0 0 7 7"><path d="M2 3.5 H5" stroke="#d0d0d0" stroke-width="1"/><path d="M3.5 2 V5" stroke="#d0d0d0" stroke-width="1"/></svg>
<svg class="a" style="left:45px;top:123px;" width="13" height="15" viewBox="0 0 13 15">
<path d="M0.5 0.5 H10.5 V7.5 H12.5 V14.5 H0.5 Z" fill="#f9d660" stroke="#e4a92c"/>
<path d="M1.5 13.5 V1.5 H9.5" stroke="#fff1b0" stroke-width="1" fill="none"/>
<path d="M10.5 8 V14" stroke="#e4a92c" stroke-width="0.8"/></svg>
<div class="a" style="left:31px;top:144px;width:7px;height:7px;background:#262626;border:1px solid #424242"></div>
<svg class="a" style="left:31px;top:144px;" width="7" height="7" viewBox="0 0 7 7"><path d="M2 3.5 H5" stroke="#d0d0d0" stroke-width="1"/><path d="M3.5 2 V5" stroke="#d0d0d0" stroke-width="1"/></svg>
<svg class="a" style="left:45px;top:141px;" width="13" height="15" viewBox="0 0 13 15">
<path d="M0.5 0.5 H10.5 V7.5 H12.5 V14.5 H0.5 Z" fill="#f9d660" stroke="#e4a92c"/>
<path d="M1.5 13.5 V1.5 H9.5" stroke="#fff1b0" stroke-width="1" fill="none"/>
<path d="M10.5 8 V14" stroke="#e4a92c" stroke-width="0.8"/></svg>
<div class="a" style="left:31px;top:162px;width:7px;height:7px;background:#262626;border:1px solid #424242"></div>
<svg class="a" style="left:31px;top:162px;" width="7" height="7" viewBox="0 0 7 7"><path d="M2 3.5 H5" stroke="#d0d0d0" stroke-width="1"/><path d="M3.5 2 V5" stroke="#d0d0d0" stroke-width="1"/></svg>
<svg class="a" style="left:45px;top:159px;" width="13" height="15" viewBox="0 0 13 15">
<path d="M0.5 0.5 H10.5 V7.5 H12.5 V14.5 H0.5 Z" fill="#f9d660" stroke="#e4a92c"/>
<path d="M1.5 13.5 V1.5 H9.5" stroke="#fff1b0" stroke-width="1" fill="none"/>
<path d="M10.5 8 V14" stroke="#e4a92c" stroke-width="0.8"/></svg>
<div class="a" style="left:31px;top:180px;width:7px;height:7px;background:#262626;border:1px solid #424242"></div>
<svg class="a" style="left:31px;top:180px;" width="7" height="7" viewBox="0 0 7 7"><path d="M2 3.5 H5" stroke="#d0d0d0" stroke-width="1"/><path d="M3.5 2 V5" stroke="#d0d0d0" stroke-width="1"/></svg>
<svg class="a" style="left:45px;top:177px;" width="13" height="15" viewBox="0 0 13 15">
<path d="M0.5 0.5 H10.5 V7.5 H12.5 V14.5 H0.5 Z" fill="#f9d660" stroke="#e4a92c"/>
<path d="M1.5 13.5 V1.5 H9.5" stroke="#fff1b0" stroke-width="1" fill="none"/>
<path d="M10.5 8 V14" stroke="#e4a92c" stroke-width="0.8"/></svg>
<div class="a" style="left:31px;top:198px;width:7px;height:7px;background:#262626;border:1px solid #424242"></div>
<svg class="a" style="left:31px;top:198px;" width="7" height="7" viewBox="0 0 7 7"><path d="M2 3.5 H5" stroke="#d0d0d0" stroke-width="1"/><path d="M3.5 2 V5" stroke="#d0d0d0" stroke-width="1"/></svg>
<svg class="a" style="left:45px;top:195px;" width="13" height="15" viewBox="0 0 13 15">
<path d="M0.5 0.5 H10.5 V7.5 H12.5 V14.5 H0.5 Z" fill="#f9d660" stroke="#e4a92c"/>
<path d="M1.5 13.5 V1.5 H9.5" stroke="#fff1b0" stroke-width="1" fill="none"/>
<path d="M10.5 8 V14" stroke="#e4a92c" stroke-width="0.8"/></svg>
<div class="a" style="left:31px;top:216px;width:7px;height:7px;background:#262626;border:1px solid #424242"></div>
<svg class="a" style="left:31px;top:216px;" width="7" height="7" viewBox="0 0 7 7"><path d="M2 3.5 H5" stroke="#d0d0d0" stroke-width="1"/><path d="M3.5 2 V5" stroke="#d0d0d0" stroke-width="1"/></svg>
<svg class="a" style="left:45px;top:213px;" width="13" height="15" viewBox="0 0 13 15">
<path d="M0.5 0.5 H10.5 V7.5 H12.5 V14.5 H0.5 Z" fill="#f9d660" stroke="#e4a92c"/>
<path d="M1.5 13.5 V1.5 H9.5" stroke="#fff1b0" stroke-width="1" fill="none"/>
<path d="M10.5 8 V14" stroke="#e4a92c" stroke-width="0.8"/></svg>
<div class="a" style="left:31px;top:234px;width:7px;height:7px;background:#262626;border:1px solid #424242"></div>
<svg class="a" style="left:31px;top:234px;" width="7" height="7" viewBox="0 0 7 7"><path d="M2 3.5 H5" stroke="#d0d0d0" stroke-width="1"/><path d="M3.5 2 V5" stroke="#d0d0d0" stroke-width="1"/></svg>
<svg class="a" style="left:45px;top:231px;" width="13" height="15" viewBox="0 0 13 15">
<path d="M0.5 0.5 H10.5 V7.5 H12.5 V14.5 H0.5 Z" fill="#f9d660" stroke="#e4a92c"/>
<path d="M1.5 13.5 V1.5 H9.5" stroke="#fff1b0" stroke-width="1" fill="none"/>
<path d="M10.5 8 V14" stroke="#e4a92c" stroke-width="0.8"/></svg>
<div class="a" style="left:31px;top:252px;width:7px;height:7px;background:#262626;border:1px solid #424242"></div>
<svg class="a" style="left:31px;top:252px;" width="7" height="7" viewBox="0 0 7 7"><path d="M2 3.5 H5" stroke="#d0d0d0" stroke-width="1"/><path d="M3.5 2 V5" stroke="#d0d0d0" stroke-width="1"/></svg>
<svg class="a" style="left:45px;top:249px;" width="13" height="15" viewBox="0 0 13 15">
<path d="M0.5 0.5 H10.5 V7.5 H12.5 V14.5 H0.5 Z" fill="#f9d660" stroke="#e4a92c"/>
<path d="M1.5 13.5 V1.5 H9.5" stroke="#fff1b0" stroke-width="1" fill="none"/>
<path d="M10.5 8 V14" stroke="#e4a92c" stroke-width="0.8"/></svg>
<div class="a" style="left:31px;top:270px;width:7px;height:7px;background:#262626;border:1px solid #424242"></div>
<svg class="a" style="left:31px;top:270px;" width="7" height="7" viewBox="0 0 7 7"><path d="M2 3.5 H5" stroke="#d0d0d0" stroke-width="1"/><path d="M3.5 2 V5" stroke="#d0d0d0" stroke-width="1"/></svg>
<svg class="a" style="left:45px;top:267px;" width="13" height="15" viewBox="0 0 13 15">
<path d="M0.5 0.5 H10.5 V7.5 H12.5 V14.5 H0.5 Z" fill="#f9d660" stroke="#e4a92c"/>
<path d="M1.5 13.5 V1.5 H9.5" stroke="#fff1b0" stroke-width="1" fill="none"/>
<path d="M10.5 8 V14" stroke="#e4a92c" stroke-width="0.8"/></svg>
<div class="a" style="left:31px;top:288px;width:7px;height:7px;background:#262626;border:1px solid #424242"></div>
<svg class="a" style="left:31px;top:288px;" width="7" height="7" viewBox="0 0 7 7"><path d="M2 3.5 H5" stroke="#d0d0d0" stroke-width="1"/><path d="M3.5 2 V5" stroke="#d0d0d0" stroke-width="1"/></svg>
<svg class="a" style="left:45px;top:285px;" width="13" height="15" viewBox="0 0 13 15">
<path d="M0.5 0.5 H10.5 V7.5 H12.5 V14.5 H0.5 Z" fill="#f9d660" stroke="#e4a92c"/>
<path d="M1.5 13.5 V1.5 H9.5" stroke="#fff1b0" stroke-width="1" fill="none"/>
<path d="M10.5 8 V14" stroke="#e4a92c" stroke-width="0.8"/></svg>
<div class="a" style="left:31px;top:306px;width:7px;height:7px;background:#262626;border:1px solid #424242"></div>
<svg class="a" style="left:31px;top:306px;" width="7" height="7" viewBox="0 0 7 7"><path d="M2 3.5 H5" stroke="#d0d0d0" stroke-width="1"/><path d="M3.5 2 V5" stroke="#d0d0d0" stroke-width="1"/></svg>
<svg class="a" style="left:45px;top:303px;" width="13" height="15" viewBox="0 0 13 15">
<path d="M0.5 0.5 H10.5 V7.5 H12.5 V14.5 H0.5 Z" fill="#f9d660" stroke="#e4a92c"/>
<path d="M1.5 13.5 V1.5 H9.5" stroke="#fff1b0" stroke-width="1" fill="none"/>
<path d="M10.5 8 V14" stroke="#e4a92c" stroke-width="0.8"/></svg>
<div class="a" style="left:31px;top:324px;width:7px;height:7px;background:#262626;border:1px solid #424242"></div>
<svg class="a" style="left:31px;top:324px;" width="7" height="7" viewBox="0 0 7 7"><path d="M2 3.5 H5" stroke="#d0d0d0" stroke-width="1"/><path d="M3.5 2 V5" stroke="#d0d0d0" stroke-width="1"/></svg>
<svg class="a" style="left:45px;top:321px;" width="13" height="15" viewBox="0 0 13 15">
<path d="M0.5 0.5 H10.5 V7.5 H12.5 V14.5 H0.5 Z" fill="#f9d660" stroke="#e4a92c"/>
<path d="M1.5 13.5 V1.5 H9.5" stroke="#fff1b0" stroke-width="1" fill="none"/>
<path d="M10.5 8 V14" stroke="#e4a92c" stroke-width="0.8"/></svg>
<div class="a" style="left:26px;top:339px;width:13px;height:4px;overflow:hidden">
<svg class="a" style="left:0px;top:0px;" width="13" height="15" viewBox="0 0 13 15"><path d="M0.5 0.5 H10.5 V7.5 H12.5 V14.5 H0.5 Z" fill="#f9d660" stroke="#e4a92c"/><path d="M1.5 13.5 V1.5 H9.5" stroke="#fff1b0" stroke-width="1" fill="none"/></svg>
</div>
<div class="a" style="left:12px;top:341px;width:7px;height:2px;background:#3a3a3a;"></div>
<svg class="a" style="left:224px;top:107px;" width="10" height="6" viewBox="0 0 10 6"><path d="M1 5.5 L5.0 1 L9 5.5" stroke="#8a8a8a" stroke-width="1.3" fill="none"/></svg>
<svg class="a" style="left:224px;top:333px;" width="10" height="6" viewBox="0 0 10 6"><path d="M1 0.5 L5.0 5 L9 0.5" stroke="#8a8a8a" stroke-width="1.3" fill="none"/></svg>
<svg class="a" style="left:9px;top:346px;" width="6" height="10" viewBox="0 0 6 10"><path d="M5.5 1 L1 5.0 L5.5 9" stroke="#8a8a8a" stroke-width="1.3" fill="none"/></svg>
<svg class="a" style="left:207px;top:346px;" width="6" height="10" viewBox="0 0 6 10"><path d="M0.5 1 L5 5.0 L0.5 9" stroke="#8a8a8a" stroke-width="1.3" fill="none"/></svg>
<svg class="a" style="left:67.5px;top:536px;" width="10" height="10" viewBox="0 0 10 10"><path d="M1 1 L9 9 M9 1 L1 9" stroke="#f2f2f2" stroke-width="2"/></svg>
<svg class="a" style="left:157px;top:536px;" width="10" height="10" viewBox="0 0 10 10"><path d="M1 1 L9 9 M9 1 L1 9" stroke="#f2f2f2" stroke-width="2"/></svg>
<svg class="a" style="left:8px;top:370px;" width="15" height="14" viewBox="0 0 15 14"><path d="M7.5 0 L15 7 H10.5 V14 H4.5 V7 H0Z" fill="#8a8a8a"/></svg>
<svg class="a" style="left:76px;top:374px;" width="4" height="6" viewBox="0 0 4 6"><path d="M0 0 L4 3 L0 6Z" fill="#888"/></svg>
<svg class="a" style="left:12px;top:395px;" width="19" height="22" viewBox="0 0 19 22">
<path d="M0.5 0.5 H16.5 V14.5 H18.5 V21.5 H0.5 Z" fill="#f9d660" stroke="#e4a92c"/>
<path d="M1.5 20.5 V1.5 H15.5" stroke="#fff1b0" stroke-width="1" fill="none"/>
<path d="M16.5 15 V21" stroke="#e4a92c" stroke-width="0.8"/></svg>
<svg class="a" style="left:12px;top:429px;" width="19" height="22" viewBox="0 0 19 22">
<path d="M0.5 0.5 H16.5 V14.5 H18.5 V21.5 H0.5 Z" fill="#f9d660" stroke="#e4a92c"/>
<path d="M1.5 20.5 V1.5 H15.5" stroke="#fff1b0" stroke-width="1" fill="none"/>
<path d="M16.5 15 V21" stroke="#e4a92c" stroke-width="0.8"/></svg>
<svg class="a" style="left:12px;top:463px;" width="19" height="22" viewBox="0 0 19 22">
<path d="M0.5 0.5 H16.5 V14.5 H18.5 V21.5 H0.5 Z" fill="#f9d660" stroke="#e4a92c"/>
<path d="M1.5 20.5 V1.5 H15.5" stroke="#fff1b0" stroke-width="1" fill="none"/>
<path d="M16.5 15 V21" stroke="#e4a92c" stroke-width="0.8"/></svg>
<svg class="a" style="left:12px;top:497px;" width="19" height="22" viewBox="0 0 19 22">
<path d="M0.5 0.5 H16.5 V14.5 H18.5 V21.5 H0.5 Z" fill="#f9d660" stroke="#e4a92c"/>
<path d="M1.5 20.5 V1.5 H15.5" stroke="#fff1b0" stroke-width="1" fill="none"/>
<path d="M16.5 15 V21" stroke="#e4a92c" stroke-width="0.8"/></svg>
<svg class="a" style="left:224px;top:392px;" width="10" height="6" viewBox="0 0 10 6"><path d="M1 5.5 L5.0 1 L9 5.5" stroke="#8a8a8a" stroke-width="1.3" fill="none"/></svg>
<svg class="a" style="left:224px;top:521px;" width="10" height="6" viewBox="0 0 10 6"><path d="M1 0.5 L5.0 5 L9 0.5" stroke="#8a8a8a" stroke-width="1.3" fill="none"/></svg>
<svg class="a" style="left:372.5px;top:67.5px;" width="10" height="10" viewBox="0 0 10 10"><path d="M1 1 L9 9 M9 1 L1 9" stroke="#f2f2f2" stroke-width="2"/></svg>
<svg class="a" style="left:519.5px;top:67.5px;" width="10" height="10" viewBox="0 0 10 10"><path d="M1 1 L9 9 M9 1 L1 9" stroke="#f2f2f2" stroke-width="2"/></svg>
<svg class="a" style="left:801px;top:66px;" width="9" height="9" viewBox="0 0 9 9"><path d="M0 0.75 H9 M0 2.75 H9" stroke="#8a8a8a" stroke-width="1.2"/><path d="M0 4.5 H9 L4.5 9Z" fill="#8a8a8a"/></svg>
<svg class="a" style="left:972.5px;top:67px;" width="7" height="4.5" viewBox="0 0 7 4.5"><path d="M0 0 H7 L3.5 4.5 Z" fill="#8a8a8a"/></svg>
<svg class="a" style="left:988.5px;top:64px;" width="8" height="10" viewBox="0 0 8 10"><path d="M2 0.5 H6.5 M2.5 0.5 V6 M5.5 0.5 V6 M0.5 6.5 H7.5 M4 6.5 V10" stroke="#8a8a8a" stroke-width="1.2" fill="none"/></svg>
<svg class="a" style="left:1003.5px;top:65px;" width="10" height="10" viewBox="0 0 10 10"><path d="M1 1 L9 9 M9 1 L1 9" stroke="#8a8a8a" stroke-width="2"/></svg>
<svg class="a" style="left:829px;top:84px;" width="16" height="16" viewBox="0 0 16 16">
<path d="M1.5 1.5 L8 8" stroke="#9a9a9a" stroke-width="1.2"/>
<path d="M8.5 8.5 L14.2 14.2" stroke="#3b8fe0" stroke-width="2.4" stroke-linecap="round"/>
<path d="M11.5 4.5 L2.2 13.8" stroke="#f0f0f0" stroke-width="2.4" stroke-linecap="round"/>
<circle cx="12" cy="4" r="3.5" fill="#f0f0f0"/><path d="M11.6 2.9 L14.6 -0.1 L16.6 1.9 L13.6 4.9 Z" fill="#333"/>
<circle cx="2.6" cy="13.4" r="0.7" fill="#777"/></svg>
<svg class="a" style="left:848px;top:84px;" width="17" height="16" viewBox="0 0 17 16"><path d="M0.5 5 L6 0.5 L10 4 L4.5 8.5Z" fill="#d4b02a" stroke="#8a6a10" stroke-width="0.7"/>
<path d="M6 7 H10 V12" stroke="#888" fill="none" stroke-width="0.8"/>
<path d="M9 7 L12.5 4 L16 7 L12.5 10Z" fill="#4ac8f0"/>
<path d="M8 12 L11.5 9.5 L15 12 L11.5 15Z" fill="#f070c8"/></svg>
<div class="a" style="left:870px;top:84px;width:1px;height:16px;background:#1e1e1e;"></div>
<svg class="a" style="left:875px;top:84px;" width="17" height="16" viewBox="0 0 17 16"><path d="M0.5 0.5 H9 L12.5 4 V15.5 H0.5Z" fill="#f2f2f2" stroke="#9a9a9a"/>
<path d="M2.5 5h6M2.5 7.5h6M2.5 10h4" stroke="#aaa"/>
<path d="M7 13 L15 5 L16.5 6.5 L8.5 14.5 L6.5 15Z" fill="#f39a2c" stroke="#a05a10" stroke-width="0.6"/></svg>
<svg class="a" style="left:896px;top:85px;" width="16" height="15" viewBox="0 0 16 15"><rect x="4.5" y="0.5" width="11" height="9" fill="#bcd8f4" stroke="#2f76c8"/><rect x="4.5" y="0.5" width="11" height="3" fill="#2f76c8"/><rect x="0.5" y="4.5" width="11" height="10" fill="#d6e8fa" stroke="#2f76c8"/><rect x="0.5" y="4.5" width="11" height="3" fill="#3a86d8"/></svg>
<div class="a" style="left:916px;top:84px;width:1px;height:16px;background:#1e1e1e;"></div>
<svg class="a" style="left:921px;top:84px;" width="17" height="16" viewBox="0 0 17 16"><path d="M0.5 0.5 H8.5 L12.5 4.5 V14.5 H0.5 Z" fill="#efefef" stroke="#bbb"/>
<path d="M8.5 0.5 V4.5 H12.5" fill="#fff" stroke="#aaa"/>
<path d="M11.5 7 L13 10.2 L16.5 10.6 L14 13 L14.7 16 L11.5 14.3 L8.3 16 L9 13 L6.5 10.6 L10 10.2 Z" fill="#f6c443" stroke="#e58a1e" stroke-width="0.8"/></svg>
<svg class="a" style="left:943px;top:86px;" width="12" height="12" viewBox="0 0 12 12"><path d="M1 1 L11 11 M11 1 L1 11" stroke="#8c8c8c" stroke-width="2.6"/></svg>
<svg class="a" style="left:961px;top:86px;" width="17" height="13" viewBox="0 0 17 13"><rect x="0.75" y="0.75" width="15.5" height="11.5" fill="#fff"/><rect x="2.5" y="2.5" width="12" height="8" fill="#eee" stroke="#222" stroke-width="1"/><path d="M4 4 h2 M5 4 V9 M4 9 h2" stroke="#222" stroke-width="0.8"/></svg>
<svg class="a" style="left:982px;top:85px;" width="15" height="16" viewBox="0 0 15 16">
<path d="M0.5 0.5 H6.5 L9 3 V11.5 H0.5 Z" fill="#8c8c8c" stroke="#5a5a5a" stroke-width="0.6"/>
<path d="M2 4.5h5M2 6.5h5M2 8.5h5" stroke="#6a6a6a" stroke-width="0.8"/>
<path d="M4.5 3.5 H10.5 L14.5 7.5 V15.5 H4.5 Z" fill="#8c8c8c" stroke="#5a5a5a" stroke-width="0.6"/>
<path d="M10.5 3.5 V7.5 H14.5" fill="#a8a8a8" stroke="#5a5a5a" stroke-width="0.6"/>
<path d="M6.5 9.5h6M6.5 11.5h6M6.5 13.5h6" stroke="#5e5e5e" stroke-width="0.9"/></svg>
<div class="a" style="left:833.5px;top:108px;width:7px;height:7px;background:#2c2c2c;border:1px solid #424242"></div>
<svg class="a" style="left:833.5px;top:108px;" width="7" height="7" viewBox="0 0 7 7"><path d="M2 3.5 H5" stroke="#d0d0d0" stroke-width="1"/></svg>
<svg class="a" style="left:847px;top:106px;" width="15" height="15" viewBox="0 0 15 15"><rect x="0" y="0" width="15" height="15" fill="#7ccdf3"/>
<path d="M5 0 V15 M10 0 V15 M0 5 H15 M0 10 H15" stroke="#5ab0e0" stroke-width="0.8"/>
<rect x="0" y="8" width="3" height="7" fill="#f0e0a0"/><rect x="0" y="12" width="3" height="3" fill="#a0d060"/>
<path d="M7 6 V12" stroke="#c33" stroke-width="0.8"/><path d="M5 12 L7 8 L9 12Z" fill="#111"/>
<rect x="10" y="2" width="3" height="3" fill="#ee1111"/></svg>
<svg class="a" style="left:865px;top:125px;" width="16" height="12" viewBox="0 0 16 12"><rect x="1.5" y="0.5" width="9" height="2" fill="#bbb" stroke="#777" stroke-width="0.6"/>
<rect x="0.5" y="3" width="11" height="7.5" fill="#9a9a9a" stroke="#666" stroke-width="0.7"/>
<rect x="3" y="4.5" width="6.5" height="4.5" fill="#3aa7ef"/>
<path d="M11.5 6.5 L15.5 3.5 V11 L11.5 8.5Z" fill="#aaa" stroke="#666" stroke-width="0.6"/></svg>
<svg class="a" style="left:865px;top:143px;" width="16" height="12" viewBox="0 0 16 12"><rect x="1.5" y="0.5" width="9" height="2" fill="#bbb" stroke="#777" stroke-width="0.6"/>
<rect x="0.5" y="3" width="11" height="7.5" fill="#9a9a9a" stroke="#666" stroke-width="0.7"/>
<rect x="3" y="4.5" width="6.5" height="4.5" fill="#3aa7ef"/>
<path d="M11.5 6.5 L15.5 3.5 V11 L11.5 8.5Z" fill="#aaa" stroke="#666" stroke-width="0.6"/></svg>
<svg class="a" style="left:866px;top:159px;" width="13" height="16" viewBox="0 0 13 16"><circle cx="6.5" cy="6" r="5.6" fill="#f6d77a" stroke="#d9a638" stroke-width="0.8"/>
<path d="M4 7 L5.5 5 L7 7 L8.5 5" stroke="#d0902a" stroke-width="0.6" fill="none"/>
<rect x="4" y="11" width="5" height="3.5" fill="#9fb0c4"/><rect x="4.5" y="14.5" width="4" height="1.5" fill="#7a8aa0"/></svg>
<svg class="a" style="left:866px;top:177px;" width="13" height="16" viewBox="0 0 13 16"><circle cx="6.5" cy="6" r="5.6" fill="#f6d77a" stroke="#d9a638" stroke-width="0.8"/>
<path d="M4 7 L5.5 5 L7 7 L8.5 5" stroke="#d0902a" stroke-width="0.6" fill="none"/>
<rect x="4" y="11" width="5" height="3.5" fill="#9fb0c4"/><rect x="4.5" y="14.5" width="4" height="1.5" fill="#7a8aa0"/></svg>
<div class="a" style="left:852px;top:199px;width:7px;height:7px;background:#262626;border:1px solid #424242"></div>
<svg class="a" style="left:852px;top:199px;" width="7" height="7" viewBox="0 0 7 7"><path d="M2 3.5 H5" stroke="#d0d0d0" stroke-width="1"/><path d="M3.5 2 V5" stroke="#d0d0d0" stroke-width="1"/></svg>
<svg class="a" style="left:865px;top:196px;" width="16" height="14" viewBox="0 0 16 14"><defs><linearGradient id="rg" x1="0" x2="1" y1="0" y2="0"><stop offset="0" stop-color="#ff3030"/><stop offset="0.3" stop-color="#ffe030"/><stop offset="0.55" stop-color="#30e060"/><stop offset="0.8" stop-color="#3090ff"/><stop offset="1" stop-color="#d040ff"/></linearGradient>
<linearGradient id="rg2" x1="0" x2="0" y1="0" y2="1"><stop offset="0" stop-color="#fff" stop-opacity="0"/><stop offset="1" stop-color="#fff" stop-opacity="0.9"/></linearGradient></defs>
<rect x="0.5" y="0.5" width="15" height="13" fill="#fff" stroke="#3a86d8"/><rect x="2" y="3" width="12" height="9" fill="url(#rg)"/><rect x="2" y="3" width="12" height="9" fill="url(#rg2)"/><rect x="0.5" y="0.5" width="15" height="2" fill="#3a86d8"/></svg>
<svg class="a" style="left:865px;top:215px;" width="16" height="12" viewBox="0 0 16 12"><path d="M3 1 H13 Q16 1 15.5 6 L15 10 Q14.5 12 12.5 11 L10.5 9 H5.5 L3.5 11 Q1.5 12 1 10 L0.5 6 Q0 1 3 1Z" fill="#e8e8e8" stroke="#888" stroke-width="0.8"/>
<path d="M3 5 H6.5 M4.75 3.25 V6.75" stroke="#555" stroke-width="1.2"/><circle cx="11" cy="4" r="0.9" fill="#c33"/><circle cx="12.5" cy="5.8" r="0.9" fill="#3a3"/></svg>
<svg class="a" style="left:865px;top:231px;" width="16" height="16" viewBox="0 0 16 16"><circle cx="8" cy="6" r="5.5" fill="#3a9ae8"/><path d="M4 3 Q7 5 6 8 Q9 8 10 10 Q12 6 9.5 3 Q7 1 4 3Z" fill="#5ec040"/>
<rect x="7" y="11" width="2" height="2.5" fill="#f0a030"/><path d="M1 13.5 H15" stroke="#aaa" stroke-width="1.4"/></svg>
<svg class="a" style="left:1005px;top:107px;" width="10" height="6" viewBox="0 0 10 6"><path d="M1 5.5 L5.0 1 L9 5.5" stroke="#8a8a8a" stroke-width="1.3" fill="none"/></svg>
<svg class="a" style="left:1005px;top:242px;" width="10" height="6" viewBox="0 0 10 6"><path d="M1 0.5 L5.0 5 L9 0.5" stroke="#8a8a8a" stroke-width="1.3" fill="none"/></svg>
<svg class="a" style="left:830px;top:255px;" width="6" height="10" viewBox="0 0 6 10"><path d="M5.5 1 L1 5.0 L5.5 9" stroke="#8a8a8a" stroke-width="1.3" fill="none"/></svg>
<svg class="a" style="left:990px;top:255px;" width="6" height="10" viewBox="0 0 6 10"><path d="M0.5 1 L5 5.0 L0.5 9" stroke="#8a8a8a" stroke-width="1.3" fill="none"/></svg>
<svg class="a" style="left:972.5px;top:282px;" width="7" height="4.5" viewBox="0 0 7 4.5"><path d="M0 0 H7 L3.5 4.5 Z" fill="#8a8a8a"/></svg>
<svg class="a" style="left:988.5px;top:279px;" width="8" height="10" viewBox="0 0 8 10"><path d="M2 0.5 H6.5 M2.5 0.5 V6 M5.5 0.5 V6 M0.5 6.5 H7.5 M4 6.5 V10" stroke="#8a8a8a" stroke-width="1.2" fill="none"/></svg>
<svg class="a" style="left:1003.5px;top:280px;" width="10" height="10" viewBox="0 0 10 10"><path d="M1 1 L9 9 M9 1 L1 9" stroke="#8a8a8a" stroke-width="2"/></svg>
<svg class="a" style="left:999px;top:298px;" width="17" height="16" viewBox="0 0 17 16"><path d="M0.5 5 L6 0.5 L10 4 L4.5 8.5Z" fill="#d4b02a" stroke="#8a6a10" stroke-width="0.7"/>
<path d="M6 7 H10 V12" stroke="#888" fill="none" stroke-width="0.8"/>
<path d="M9 7 L12.5 4 L16 7 L12.5 10Z" fill="#4ac8f0"/>
<path d="M8 12 L11.5 9.5 L15 12 L11.5 15Z" fill="#f070c8"/></svg>
<svg class="a" style="left:831px;top:344px;" width="16" height="14" viewBox="0 0 16 14"><rect x="0.5" y="1.5" width="15" height="12" fill="#f4f4f4" stroke="#3a86d8"/><rect x="0.5" y="1.5" width="15" height="2.5" fill="#4a9ae8"/>
<circle cx="3" cy="6.5" r="0.9" fill="#2a2"/><circle cx="3" cy="9" r="0.9" fill="#c33"/><circle cx="3" cy="11.5" r="0.9" fill="#33c"/>
<path d="M5 6.5h8M5 9h8M5 11.5h8" stroke="#999" stroke-width="0.7"/>
<path d="M6 5 L11 1 L15 3 L10 7Z" fill="#d9a15a" stroke="#8a5a20" stroke-width="0.6"/></svg>
<svg class="a" style="left:854px;top:344px;" width="12" height="15" viewBox="0 0 12 15"><path d="M5 0.5 H11 L7.5 6 H10.5 L2 14.5 L4.5 8 H1.5Z" fill="#f3cc2e" stroke="#b88a10" stroke-width="0.7"/></svg>
<div class="a" style="left:1003px;top:364px;width:14px;height:287px;background:#2e2e2e;"></div>
<div class="a" style="left:1003px;top:377px;width:14px;height:47px;background:#3c3c3c;"></div>
<svg class="a" style="left:1005px;top:367px;" width="10" height="6" viewBox="0 0 10 6"><path d="M1 5.5 L5.0 1 L9 5.5" stroke="#8a8a8a" stroke-width="1.3" fill="none"/></svg>
<svg class="a" style="left:1005px;top:642px;" width="10" height="6" viewBox="0 0 10 6"><path d="M1 0.5 L5.0 5 L9 0.5" stroke="#8a8a8a" stroke-width="1.3" fill="none"/></svg>
<div class="a" style="left:906px;top:383px;width:6px;height:92px;background:#3b3b3b;"></div>
<div class="a" style="left:906px;top:494px;width:6px;height:157px;background:#3b3b3b;"></div>
<div class="a" style="left:952px;top:388px;width:13px;height:13px;background:#222;border:1px solid #6a6a6a;"></div>
<svg class="a" style="left:953px;top:390px;" width="11" height="9" viewBox="0 0 11 9"><path d="M1 4.5 L4 7.5 L10 1" stroke="#fff" stroke-width="2" fill="none"/></svg>
<div class="a" style="left:951px;top:409px;width:49px;height:18px;background:#262626;border:1px solid #5c5c5c;"></div>
<div class="a" style="left:926px;top:432px;width:22px;height:18px;border:1px solid #5c5c5c;"></div>
<div class="a" style="left:951px;top:432px;width:49px;height:18px;border:1px solid #5c5c5c;"></div>
<div class="t" style="left:956px;top:435.19px;font-size:11px;line-height:13px;color:#e6e6e6;">Auto</div>
<svg class="a" style="left:987.5px;top:439.5px;" width="8" height="4.5" viewBox="0 0 8 4.5"><path d="M0 0 H8 L4.0 4.5 Z" fill="#9a9a9a"/></svg>
<div class="a" style="left:926px;top:455px;width:22px;height:18px;border:1px solid #5c5c5c;"></div>
<div class="a" style="left:951px;top:455px;width:49px;height:18px;border:1px solid #5c5c5c;"></div>
<div class="t" style="left:956px;top:458.19px;font-size:11px;line-height:13px;color:#e6e6e6;">True</div>
<svg class="a" style="left:987.5px;top:462.5px;" width="8" height="4.5" viewBox="0 0 8 4.5"><path d="M0 0 H8 L4.0 4.5 Z" fill="#9a9a9a"/></svg>
<svg class="a" style="left:916px;top:504px;" width="5" height="5" viewBox="0 0 5 5"><circle cx="2.5" cy="2.5" r="2.5" fill="#777"/></svg>
<div class="a" style="left:926px;top:498px;width:22px;height:18px;border:1px solid #5c5c5c;"></div>
<svg class="a" style="left:932px;top:503px;" width="6" height="8" viewBox="0 0 6 8"><path d="M0 0 L6 4 L0 8Z" fill="#aaa"/></svg>
<div class="t" style="left:955.4px;top:502.49px;font-size:11px;line-height:13px;color:#e6e6e6;width:45.60px;overflow:hidden;">Renderir</div>
<div class="a" style="left:830px;top:523px;width:14px;height:14px;border:1px solid #555;"></div>
<svg class="a" style="left:834px;top:527px;" width="6" height="6" viewBox="0 0 6 6"><path d="M0.5 3 H5.5 M3 0.5 V5.5" stroke="#bbb" stroke-width="1"/></svg>
<div class="a" style="left:926px;top:521px;width:22px;height:18px;border:1px solid #5c5c5c;"></div>
<div class="a" style="left:951px;top:521px;width:27px;height:18px;background:#262626;border:1px solid #5c5c5c;"></div>
<div class="t" style="left:955px;top:524.69px;font-size:11px;line-height:13px;color:#e6e6e6;">1 1</div>
<div class="a" style="left:980.5px;top:521px;width:19px;height:18px;background:#ffffff;border:1px solid #5c5c5c;"></div>
<div class="a" style="left:926px;top:544px;width:22px;height:18px;border:1px solid #5c5c5c;"></div>
<div class="a" style="left:951px;top:544px;width:48px;height:18px;background:#262626;border:1px solid #5c5c5c;"></div>
<div class="t" style="left:955px;top:547.69px;font-size:11px;line-height:13px;color:#e6e6e6;">1</div>
<div class="a" style="left:926px;top:567px;width:22px;height:18px;border:1px solid #5c5c5c;"></div>
<div class="t" style="left:955px;top:571.19px;font-size:11px;line-height:13px;color:#e6e6e6;">(Null)</div>
<div class="a" style="left:926px;top:590px;width:22px;height:18px;border:1px solid #5c5c5c;"></div>
<div class="a" style="left:951px;top:590px;width:49px;height:18px;border:1px solid #5c5c5c;"></div>
<div class="t" style="left:956px;top:593.19px;font-size:11px;line-height:13px;color:#e6e6e6;">3D</div>
<svg class="a" style="left:987.5px;top:597.5px;" width="8" height="4.5" viewBox="0 0 8 4.5"><path d="M0 0 H8 L4.0 4.5 Z" fill="#9a9a9a"/></svg>
<div class="a" style="left:926px;top:613px;width:22px;height:18px;border:1px solid #5c5c5c;"></div>
<div class="a" style="left:951px;top:613px;width:49px;height:18px;border:1px solid #5c5c5c;"></div>
<div class="t" style="left:956px;top:616.19px;font-size:11px;line-height:13px;color:#e6e6e6;">Un...</div>
<svg class="a" style="left:987.5px;top:620.5px;" width="8" height="4.5" viewBox="0 0 8 4.5"><path d="M0 0 H8 L4.0 4.5 Z" fill="#9a9a9a"/></svg>
<svg class="a" style="left:916px;top:642px;" width="5" height="5" viewBox="0 0 5 5"><circle cx="2.5" cy="2.5" r="2.5" fill="#777"/></svg>
<div class="a" style="left:926px;top:636px;width:22px;height:15px;border:1px solid #5c5c5c;border-bottom:none"></div>
<svg class="a" style="left:932px;top:641px;" width="6" height="8" viewBox="0 0 6 8"><path d="M0 0 L6 4 L0 8Z" fill="#aaa"/></svg>
<div class="t" style="left:955px;top:641.19px;font-size:11px;line-height:13px;color:#e6e6e6;">Camera</div>
<div class="a" style="left:997px;top:640px;width:1px;height:11px;background:#3a6ad8;"></div>
<div class="a" style="left:820px;top:651px;width:200px;height:0px;"></div>
<div class="a" style="left:826px;top:651px;width:176px;height:7px;background:#333;"></div>
<div class="a" style="left:12px;top:529px;width:20px;height:2px;overflow:hidden;opacity:0.35">
<svg class="a" style="left:0px;top:0px;" width="19" height="22" viewBox="0 0 19 22"><path d="M0.5 0.5 H16.5 V14.5 H18.5 V21.5 H0.5 Z" fill="#f9d660" stroke="#e4a92c"/></svg>
</div>
<div class="a" style="left:866px;top:249px;width:16px;height:3px;overflow:hidden">
<svg class="a" style="left:0px;top:0px;" width="16" height="16" viewBox="0 0 16 16"><circle cx="8" cy="6" r="5.5" fill="#3a9ae8"/></svg>
</div>
</body></html>
